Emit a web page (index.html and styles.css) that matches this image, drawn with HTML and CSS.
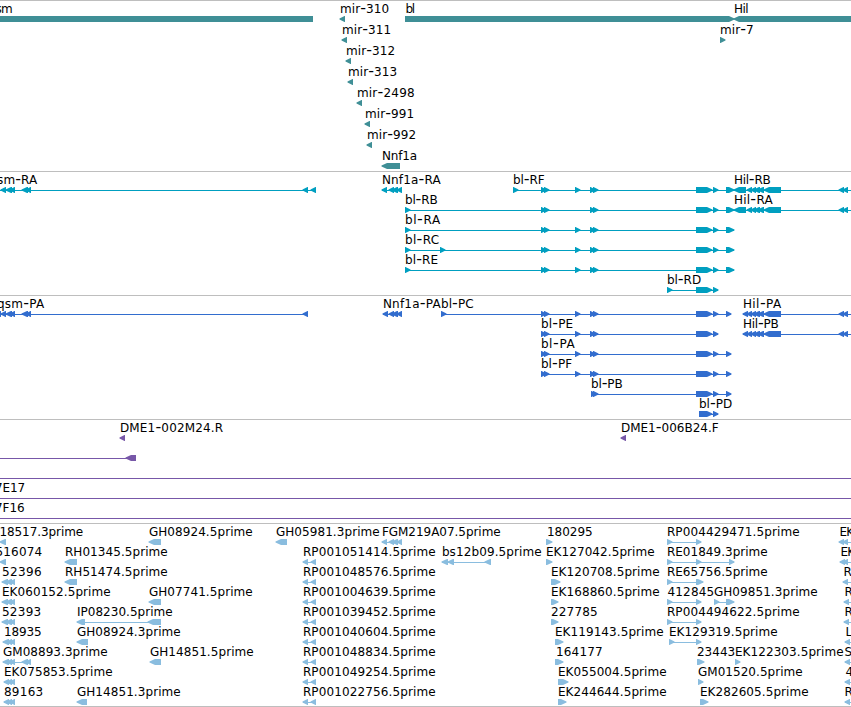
FILE: index.html
```
<!DOCTYPE html>
<html lang="en">
<head>
  <meta charset="utf-8">
  <title>Genome Browser</title>
  <link rel="stylesheet" href="styles.css">
</head>
<body>
  <div class="browser">
    <div class="track genes" id="genes"></div>
    <div class="track transcripts" id="transcripts"></div>
    <div class="track proteins" id="proteins"></div>
    <div class="track clones" id="clones"></div>
    <div class="track ests" id="ests"></div>
  </div>
  <script src="tracks.js"></script>
</body>
</html>
```
FILE: styles.css
```
body {
  margin: 0;
  background-color: #fff;
  font-family: "DejaVu Sans", sans-serif;
  font-size: 12px;
  color: #000;
}

.browser {
  width: 851px;
  height: 707px;
  overflow: hidden;
  display: flex;
  flex-direction: column;
}

.track {
  box-sizing: border-box;
  flex: none;
  border-top: 1px solid #bebebe;
  overflow: hidden;
}

.track svg {
  display: block;
}

.track text {
  fill: #000;
}

/* wider hyphen in the feature names */
.track .dash {
  font-size: 16px;
}

.genes {
  height: 171px;
  color: #3f8f96;
}

.transcripts {
  height: 124px;
  color: #009fc0;
}

.proteins {
  height: 124px;
  color: #326dce;
}

.clones {
  height: 104px;
  color: #7757a8;
}

.ests {
  height: 184px;
  color: #8abddf;
  border-bottom: 1px solid #bebebe;
}
```
FILE: tracks.js
```
// feature: [row, label, label start, label end, strand, exons]
// strand is "<", ">" or "-" for a span with no direction
var utr = [[696, 712], [713, 718]];
var blStart = [[541, 546], [544, 549]];
var blMid = [[575, 580]];
var blPair = [[590, 595], [593, 598]];
var blEnd = utr.concat([[726, 734]]);
var blCdsEnd = utr.concat([[726, 731]]);
var hilTail = [[747, 752], [751, 756], [754, 760], [758, 764], [764, 781], [839, 844], [843, 848], [852, 857]];
var nnf = [[389, 394], [392, 398], [397, 402]];
var qsm = [[1, 6], [6, 12], [10, 15], [22, 28], [26, 31], [303, 308]];
var left3 = [[2, 8], [6, 12], [10, 15]];
var left3b = [[3, 9], [7, 12], [10, 15]];
var rpPair = [[303, 308], [311, 316]];
var blFirst = [[667, 672], [696, 701]];

function exons() {
  return [].concat.apply([], arguments);
}

var tracks = {
  genes: { pitch: 21, features: [
    [0, "qsm", -11, 12.5, "-", [[-5, 313]]],
    [0, "mir-310", 340.5, 389, "<", [[340, 345]]],
    [0, "bl", 406, 415, ">", [[405, 734]]],
    [0, "Hil", 734.5, 748.5, "<", [[734, 860]]],
    [1, "mir-311", 342.5, 391, "<", [[342, 347]]],
    [1, "mir-7", 720.5, 753.5, ">", [[720, 725]]],
    [2, "mir-312", 346.5, 395, "<", [[346, 351]]],
    [3, "mir-313", 348.5, 397, "<", [[348, 353]]],
    [4, "mir-2498", 357.5, 414.5, "<", [[357, 362]]],
    [5, "mir-991", 365.5, 414, "<", [[365, 370]]],
    [6, "mir-992", 367.5, 416, "<", [[367, 372]]],
    [7, "Nnf1a", 382.5, 417, "<", [[382, 400]]]
  ]},
  transcripts: { pitch: 20, features: [
    [0, "qsm-RA", -10, 37, "<", exons([[-8, -3]], qsm, [[311, 316]])],
    [0, "Nnf1a-RA", 382.5, 440.5, "<", exons([[382, 387]], nnf)],
    [0, "bl-RF", 513.5, 544.5, ">", exons([[513, 518]], blStart, blMid, blPair, blEnd)],
    [0, "Hil-RB", 734.5, 770.5, "<", exons([[734, 746]], hilTail)],
    [1, "bl-RB", 405.5, 437.5, ">", exons([[405, 410]], blStart, blPair, blEnd)],
    [1, "Hil-RA", 734.5, 772.5, "<", exons([[734, 746]], hilTail)],
    [2, "bl-RA", 405.5, 440, ">", exons([[405, 410]], blStart, blMid, blPair, blEnd)],
    [3, "bl-RC", 405.5, 439, ">", exons([[405, 410], [440, 445]], blStart, blMid, blPair, blEnd)],
    [4, "bl-RE", 405.5, 438, ">", exons([[405, 410]], blStart, blMid, blPair, blEnd)],
    [5, "bl-RD", 667.5, 701, ">", exons([[667, 672]], utr)]
  ]},
  proteins: { pitch: 20, features: [
    [0, "qsm-PA", -2.5, 44, "<", exons([[-4, 1]], qsm)],
    [0, "Nnf1a-PA", 383.5, 440.5, "<", exons([[383, 388]], nnf)],
    [0, "bl-PC", 441.5, 473.5, ">", exons([[441, 446]], blStart, blMid, blPair, blCdsEnd)],
    [0, "Hil-PA", 743.5, 781, "<", exons([[743, 748]], hilTail)],
    [1, "bl-PE", 541.5, 573, ">", exons(blStart, blMid, blPair, utr)],
    [1, "Hil-PB", 743.5, 778.5, "<", exons([[743, 748]], hilTail)],
    [2, "bl-PA", 541.5, 574.5, ">", exons(blStart, blMid, blPair, blCdsEnd)],
    [3, "bl-PF", 541.5, 572, ">", exons(blStart, blMid, blPair, blCdsEnd)],
    [4, "bl-PB", 591.5, 622.5, ">", exons([[591, 596], [593, 598]], blCdsEnd)],
    [5, "bl-PD", 699.5, 732, ">", exons([[699, 712], [713, 718]])]
  ]},
  clones: { pitch: 20, features: [
    [0, "DME1-002M24.R", 120.5, 223, "<", [[120, 125]]],
    [0, "DME1-006B24.F", 621.5, 718.5, "<", [[621, 626]]],
    [1, "", 0, 0, "<", [[-10, -5], [126, 136]]],
    [2, "", 0, 0, "<", [[-10, -5], [860, 865]]],
    [3, "7E17", -4.5, 25, "<", [[-10, -5], [860, 865]]],
    [4, "7F16", -4.5, 24.5, "<", [[-10, -5], [860, 865]]]
  ]},
  ests: { pitch: 20, features: [
    [0, "18517.3prime", 0, 83, "<", [[0, 6]]],
    [0, "GH08924.5prime", 149.5, 252.5, "<", [[149, 161]]],
    [0, "GH05981.3prime", 276.5, 379.5, "<", [[276, 287]]],
    [0, "FGM219A07.5prime", 382.5, 500.5, "<", exons([[382, 387]], nnf)],
    [0, "180295", 547.5, 592.5, ">", [[546, 552]]],
    [0, "RP004429471.5prime", 667.5, 799.5, ">", blFirst],
    [0, "EK", 840, 854, "<", [[839, 844], [843, 848], [853, 858]]],
    [1, "516074", -4, 42, "<", [[0, 6]]],
    [1, "RH01345.5prime", 65.5, 167.5, "<", [[65, 77]]],
    [1, "RP001051414.5prime", 303.5, 435.5, "<", rpPair],
    [1, "bs12b09.5prime", 442.5, 541.5, "<", [[442, 448], [448, 454], [485, 491]]],
    [1, "EK127042.5prime", 546.5, 654.5, ">", [[546, 552]]],
    [1, "RE01849.3prime", 667.5, 767.5, ">", exons(blFirst, [[729, 734]])],
    [1, "EK", 841, 855, "<", [[840, 845], [843, 848], [853, 858]]],
    [2, "52396", 2.5, 41.5, "<", left3],
    [2, "RH51474.5prime", 65.5, 167.5, "<", [[65, 77]]],
    [2, "RP001048576.5prime", 303.5, 435.5, "<", rpPair],
    [2, "EK120708.5prime", 551.5, 659.5, ">", [[551, 560]]],
    [2, "RE65756.5prime", 667.5, 767.5, ">", [[667, 672], [696, 703]]],
    [2, "R", 844, 851, "<", [[843, 848], [853, 858]]],
    [3, "EK060152.5prime", 2.5, 110.5, "<", left3],
    [3, "GH07741.5prime", 149.5, 252.5, "<", [[149, 161]]],
    [3, "RP001004639.5prime", 303.5, 435.5, "<", rpPair],
    [3, "EK168860.5prime", 551.5, 659.5, ">", [[551, 558]]],
    [3, "412845", 668, 714, ">", blFirst],
    [3, "GH09851.3prime", 714.5, 817.5, ">", [[714, 719], [726, 734]]],
    [3, "R", 845, 852, "<", [[844, 849], [853, 858]]],
    [4, "52393", 2.5, 41, "<", left3],
    [4, "IP08230.5prime", 77.5, 172.5, "<", [[77, 85], [148, 161]]],
    [4, "RP001039452.5prime", 303.5, 435.5, "<", rpPair],
    [4, "227785", 551.5, 597.5, ">", [[551, 558]]],
    [4, "RP004494622.5prime", 667.5, 799.5, ">", blFirst],
    [4, "R", 845, 852, "<", [[844, 849], [853, 858]]],
    [5, "18935", 4.5, 41.5, "<", left3b],
    [5, "GH08924.3prime", 77.5, 180.5, "<", [[77, 88]]],
    [5, "RP001040604.5prime", 303.5, 435.5, "<", rpPair],
    [5, "EK119143.5prime", 555.5, 663.5, ">", [[555, 563]]],
    [5, "EK129319.5prime", 669.5, 777.5, ">", [[669, 674], [696, 701]]],
    [5, "L", 846, 852, "<", [[845, 850], [853, 858]]],
    [6, "GM08893.3prime", 3.5, 107.5, "<", exons(left3b, [[22, 28], [26, 31]])],
    [6, "GH14851.5prime", 150.5, 253.5, "<", [[150, 161]]],
    [6, "RP001048834.5prime", 303.5, 435.5, "<", rpPair],
    [6, "164177", 556.5, 602.5, ">", [[555, 563]]],
    [6, "23443", 697.5, 735, ">", [[697, 704]]],
    [6, "EK122303.5prime", 735.5, 843.5, ">", [[735, 740]]],
    [6, "S", 845, 851, "<", [[845, 850], [853, 858]]],
    [7, "EK075853.5prime", 4.5, 112.5, "<", [[4, 9], [7, 12], [10, 15]]],
    [7, "RP001049254.5prime", 303.5, 435.5, "<", rpPair],
    [7, "EK055004.5prime", 558.5, 666.5, ">", [[558, 568]]],
    [7, "GM01520.5prime", 698.5, 802.5, ">", [[698, 703]]],
    [7, "4", 846, 853, "<", [[845, 850], [853, 858]]],
    [8, "89163", 4.5, 43, "<", [[4, 9], [7, 12], [10, 15]]],
    [8, "GH14851.3prime", 77.5, 180.5, "<", [[77, 87]]],
    [8, "RP001022756.5prime", 303.5, 435.5, "<", rpPair],
    [8, "EK244644.5prime", 558.5, 666.5, ">", [[558, 566]]],
    [8, "EK282605.5prime", 700.5, 808.5, ">", [[700, 708]]],
    [8, "R", 845, 852, "<", [[845, 850], [853, 858]]]
  ]}
};

// block with an arrow head on the side the feature points to
function exonShape(a, b, y, strand) {
  var tip = Math.min(5, b - a - 0.5);
  if (strand === "-") {
    return `<rect x="${a}" y="${y}" width="${b - a}" height="6" fill="currentColor"/>`;
  }
  var points = strand === "<"
    ? `${a - 0.5},${y + 2.5} ${a + tip},${y} ${b},${y} ${b},${y + 6} ${a + tip},${y + 6} ${a - 0.5},${y + 3.5}`
    : `${b + 0.5},${y + 2.5} ${b - tip},${y} ${a},${y} ${a},${y + 6} ${b - tip},${y + 6} ${b + 0.5},${y + 3.5}`;
  return `<polygon points="${points}" fill="currentColor"/>`;
}

function drawTrack(id) {
  var el = document.getElementById(id);
  var svg = "";

  tracks[id].features.forEach(([row, label, x1, x2, strand, list]) => {
    var top = row * tracks[id].pitch;
    if (list.length > 1) {
      var start = list[0][0];
      var end = list[list.length - 1][1];
      svg += `<rect x="${start}" y="${top + 18}" width="${end - start}" height="1" fill="currentColor"/>`;
    }
    list.forEach(e => {
      svg += exonShape(e[0], e[1], top + 15, strand);
    });
    if (label) {
      var name = label.replace("-", '<tspan class="dash">-</tspan>');
      svg += `<text x="${x1 - 0.6}" y="${top + 12}" textLength="${x2 - x1 + 0.8}">${name}</text>`;
    }
  });

  el.innerHTML = `<svg width="851" height="${el.clientHeight}">${svg}</svg>`;
}

Object.keys(tracks).forEach(drawTrack);
```
